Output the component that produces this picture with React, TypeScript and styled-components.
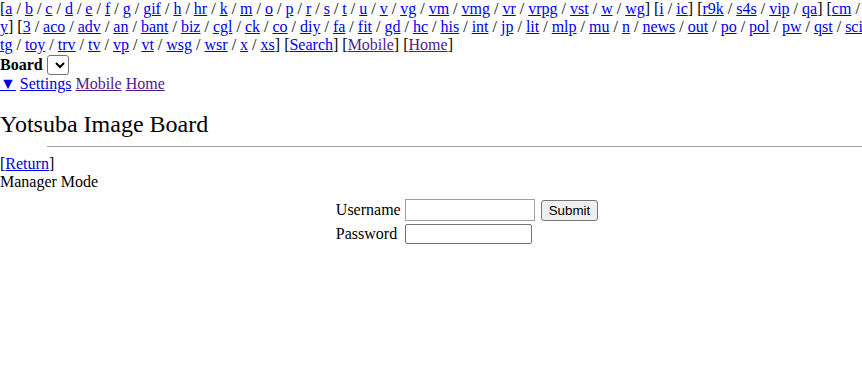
import styled, { createGlobalStyle } from "styled-components";

const GlobalStyle = createGlobalStyle`
  html, body {
    margin: 0;
    padding: 0;
    overflow: hidden;
    background: #fff;
  }
  body {
    font-family: "Liberation Serif", "Times New Roman", serif;
    font-size: 16px;
    color: #000;
  }
  a { color: #0000ee; }
`;

const groups: string[][] = [
  ["a", "b", "c", "d", "e", "f", "g", "gif", "h", "hr", "k", "m", "o", "p", "r", "s", "t", "u", "v", "vg", "vm", "vmg", "vr", "vrpg", "vst", "w", "wg"],
  ["i", "ic"],
  ["r9k", "s4s", "vip", "qa"],
  ["cm", "hm", "lgbt", "y"],
  ["3", "aco", "adv", "an", "bant", "biz", "cgl", "ck", "co", "diy", "fa", "fit", "gd", "hc", "his", "int", "jp", "lit", "mlp", "mu", "n", "news", "out", "po", "pol", "pw", "qst", "sci", "soc", "sp", "tg", "toy", "trv", "tv", "vp", "vt", "wsg", "wsr", "x", "xs"],
];

// page is a bit wider than the window, the right edge gets clipped
const Page = styled.div`
  width: 934px;
`;

const BoardNav = styled.div`
  line-height: normal;
`;

const NavLink = styled.a<{ $visited?: boolean }>`
  color: ${(p) => (p.$visited ? "#551a8b" : "#0000ee")};
  text-decoration: underline;
`;

const BoardPick = styled.div`
  display: flex;
  align-items: center;
  gap: 4px;
  margin-top: 1px;
  font-weight: bold;
`;

const BoardSelect = styled.select`
  width: 22px;
  height: 20px;
  padding: 0;
  font-size: 13px;
  border: 1px solid #767676;
  border-radius: 3px;
  background: #fff;
`;

const MenuRow = styled.div``;

const Title = styled.h1`
  font-size: 24px;
  font-weight: normal;
  margin: 18px 0 8px;
`;

const Rule = styled.hr`
  width: 90%;
  margin: 0 auto;
  border: none;
  border-top: 1px solid #a0a0a0;
  height: 0;
`;

const ReturnRow = styled.div`
  margin-top: 8px;
`;

const LoginTable = styled.table`
  margin: 5px auto 0;
  border-spacing: 2px 3px;
  td {
    padding: 0 1px;
    vertical-align: middle;
  }
`;

const Field = styled.input<{ $wide?: boolean }>`
  width: ${(p) => (p.$wide ? "124px" : "121px")};
  height: ${(p) => (p.$wide ? "18px" : "16px")};
  border: 1px solid ${(p) => (p.$wide ? "#a0a0a0" : "#767676")};
  border-radius: ${(p) => (p.$wide ? "0" : "2px")};
  padding: 1px 2px;
  margin: 0;
  font-size: 13px;
`;

const SubmitButton = styled.button`
  font-family: Arial, "Liberation Sans", sans-serif;
  font-size: 13.33px;
  height: 21px;
  padding: 1px 7px;
  margin-left: 2px;
  border: 1px solid #767676;
  border-radius: 3px;
  background: #efefef;
  color: #000;
`;

export default function App() {
  return (
    <Page>
      <GlobalStyle />
      <BoardNav>
        {groups.map((g, gi) => (
          <span key={gi}>
            [
            {g.map((b, i) => (
              <span key={b}>
                <NavLink href="#">{b}</NavLink>
                {i < g.length - 1 ? " / " : ""}
              </span>
            ))}
            ]{" "}
          </span>
        ))}
        [<NavLink href="#">Search</NavLink>] [<NavLink href="#" $visited>Mobile</NavLink>] [
        <NavLink href="#" $visited>Home</NavLink>]
      </BoardNav>
      <BoardPick>
        Board
        <BoardSelect />
      </BoardPick>
      <MenuRow>
        <NavLink href="#">▼</NavLink> <NavLink href="#">Settings</NavLink>{" "}
        <NavLink href="#" $visited>Mobile</NavLink> <NavLink href="#" $visited>Home</NavLink>
      </MenuRow>
      <Title>Yotsuba Image Board</Title>
      <Rule />
      <ReturnRow>
        [<NavLink href="#">Return</NavLink>]
      </ReturnRow>
      <div>Manager Mode</div>
      <LoginTable>
        <tbody>
          <tr>
            <td>Username</td>
            <td>
              <Field $wide />
            </td>
            <td>
              <SubmitButton>Submit</SubmitButton>
            </td>
          </tr>
          <tr>
            <td>Password</td>
            <td>
              <Field type="password" />
            </td>
          </tr>
        </tbody>
      </LoginTable>
    </Page>
  );
}
